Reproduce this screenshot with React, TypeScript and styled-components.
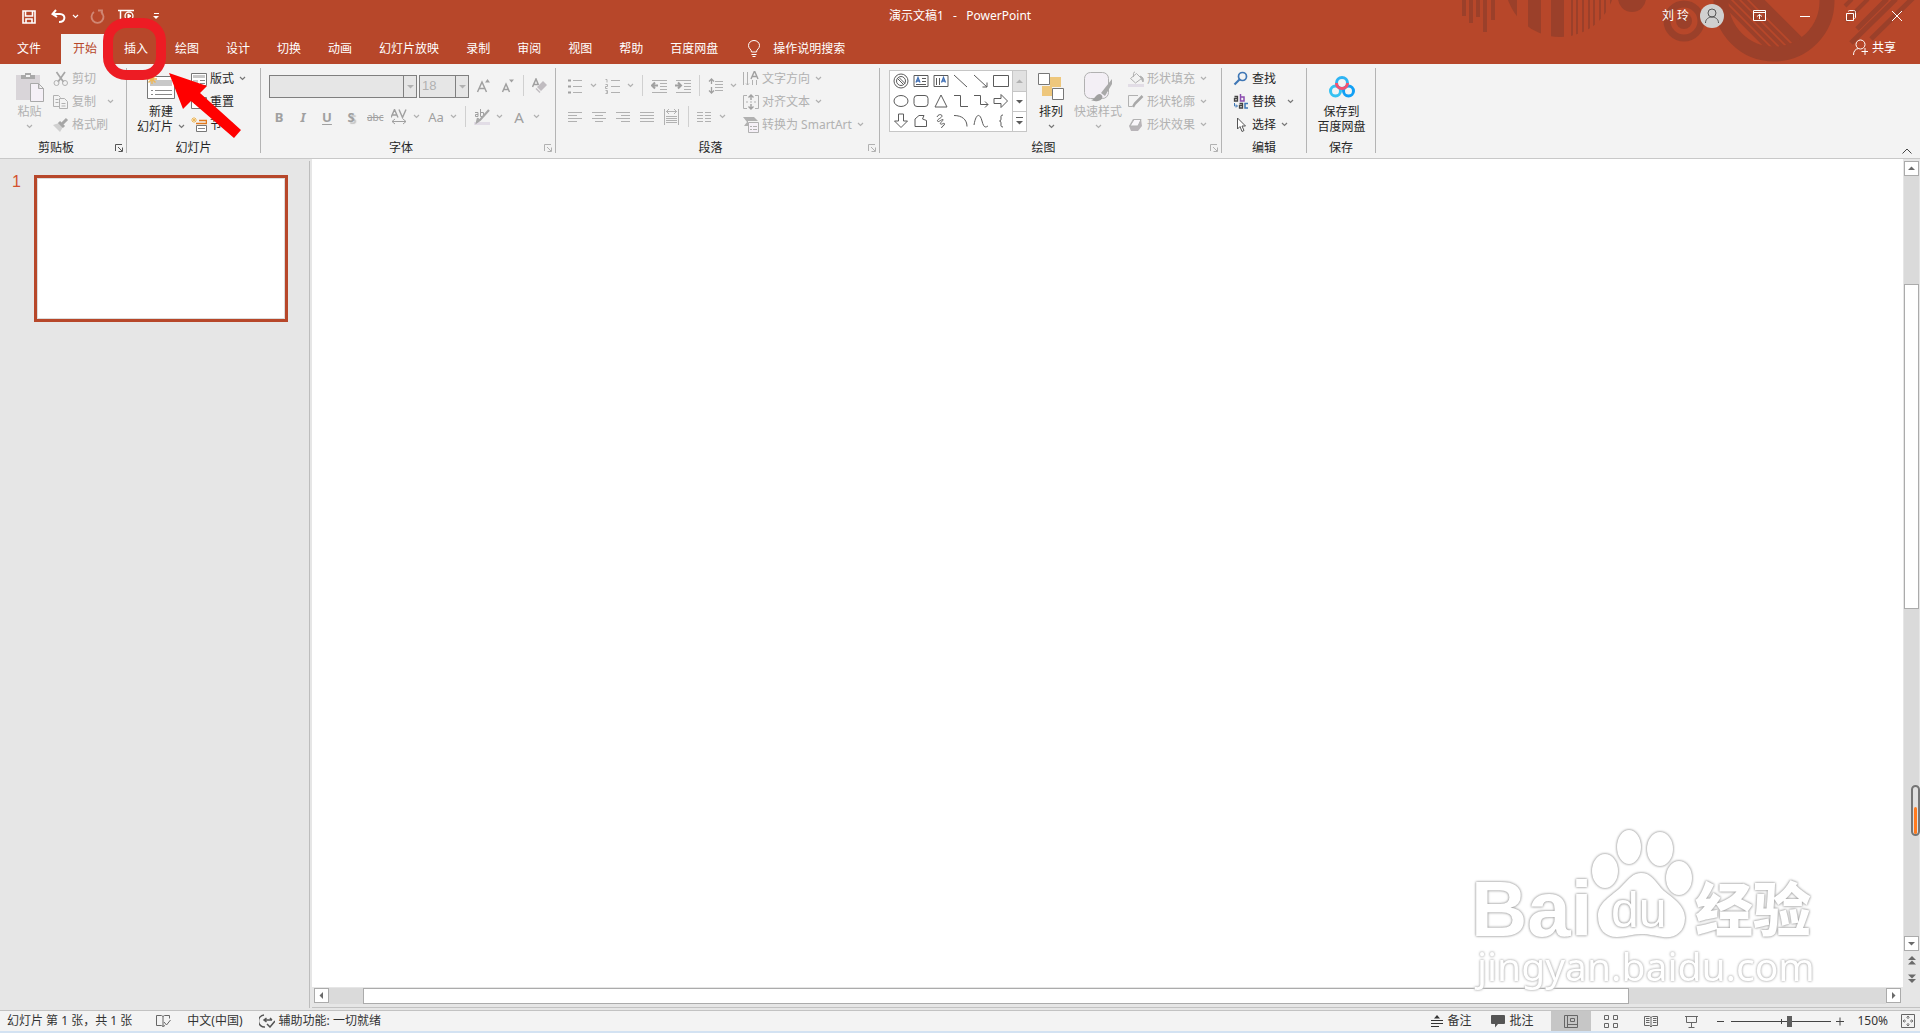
import React from "react";
import styled, { createGlobalStyle } from "styled-components";

const GlobalStyle = createGlobalStyle`
  *, *::before, *::after { box-sizing: border-box; }
  body { margin: 0; background: #e6e6e6; }
  body, button, select, input {
    font-family: "Noto Sans", "Noto Sans CJK SC", sans-serif;
    font-size: 12px;
    line-height: 16px;
  }
  button { margin: 0; padding: 0; border: 0; background: none; color: inherit; cursor: default; }
  svg { display: block; flex: none; }
`;

const brand = "#b7472a";
const ink = "#262626";
const faded = "#b1b1b1";

/* ---------- page frame ---------- */

const Page = styled.div`
  position: relative;
  display: flex;
  flex-direction: column;
  height: 100vh;
  overflow: hidden;
  color: ${ink};
`;

const Header = styled.header`
  position: relative;
  background: ${brand};
  color: #fff;
`;

const HeaderArt = styled.svg`
  position: absolute;
  top: 0;
  right: 0;
`;

const TitleBar = styled.div`
  position: relative;
  display: grid;
  grid-template-columns: 1fr auto 1fr;
  align-items: center;
  height: 34px;
  padding-bottom: 3px;
`;

const QuickAccess = styled.div`
  display: flex;
  align-items: center;
  padding: 2px 0 0 22px;
`;

const QuickButton = styled.button<{ $after: number; $dim?: boolean }>`
  display: flex;
  align-items: center;
  gap: 5px;
  margin-right: ${(p) => p.$after}px;
  opacity: ${(p) => (p.$dim ? 0.35 : 1)};
`;

const DocTitle = styled.h1`
  margin: 0;
  font-size: 12px;
  line-height: 16px;
  font-weight: 400;
  white-space: pre;
`;

const WindowArea = styled.div`
  display: flex;
  align-items: center;
  justify-content: flex-end;
`;

const Account = styled.button`
  display: flex;
  align-items: center;
  gap: 11px;
  margin-right: 12px;
`;

const Avatar = styled.span`
  display: grid;
  place-items: center;
  width: 24px;
  height: 24px;
  border-radius: 50%;
  background: #d0d0d0;
`;

const WindowButton = styled.button`
  display: grid;
  place-items: center;
  width: 46px;
  height: 30px;
`;

const TabBar = styled.nav`
  position: relative;
  display: flex;
  gap: 3px;
  height: 30px;
`;

const Tab = styled.button<{ $active?: boolean; $wide?: boolean }>`
  padding: 0 ${(p) => (p.$wide ? 17 : 12)}px;
  background: ${(p) => (p.$active ? "#f3f3f3" : "transparent")};
  color: ${(p) => (p.$active ? brand : "#fff")};
`;

const TellMe = styled.button`
  display: flex;
  align-items: center;
  gap: 13px;
  padding: 0 0 1px 15px;
`;

const Share = styled.button`
  display: flex;
  align-items: center;
  gap: 4px;
  margin-left: auto;
  padding: 0 24px 3px 0;
`;

/* ---------- ribbon ---------- */

const Ribbon = styled.section`
  display: flex;
  background: #f3f3f3;
  border-bottom: 1px solid #c8c8c8;
`;

const GroupBox = styled.section<{ $width: number }>`
  position: relative;
  display: flex;
  flex-direction: column;
  width: ${(p) => p.$width}px;
  padding-top: 3px;
  &::after {
    content: "";
    position: absolute;
    top: 4px;
    right: 0;
    bottom: 5px;
    width: 1px;
    background: #b4b4b4;
  }
`;

const GroupBody = styled.div<{ $pad: number; $center?: boolean }>`
  display: flex;
  justify-content: ${(p) => (p.$center ? "center" : "flex-start")};
  height: 69px;
  padding-left: ${(p) => p.$pad}px;
`;

const GroupFoot = styled.div`
  display: flex;
  align-items: center;
  height: 22px;
  padding: 2px 1px 0 0;
`;

const GroupName = styled.h2`
  flex: 1;
  margin: 0;
  font-size: 12px;
  line-height: 16px;
  font-weight: 400;
  text-align: center;
`;

const Launcher = styled.button<{ $off?: boolean }>`
  display: grid;
  place-items: center;
  width: 14px;
  height: 16px;
  color: ${(p) => (p.$off ? faded : "#555")};
`;

const Stack = styled.div<{ $left?: number }>`
  display: flex;
  flex-direction: column;
  margin-left: ${(p) => p.$left ?? 0}px;
`;

const Row = styled.div<{ $left?: number }>`
  display: flex;
  align-items: center;
  height: 31px;
  padding-left: ${(p) => p.$left ?? 0}px;
`;

const Rows = styled.div`
  padding-top: 3px;
`;

const SmallButton = styled.button<{ $off?: boolean; $split?: boolean }>`
  display: flex;
  align-items: center;
  gap: 3px;
  height: 23px;
  color: ${(p) => (p.$off ? faded : ink)};
  white-space: nowrap;
  & > svg:last-child:not(:first-child) { margin-left: ${(p) => (p.$split ? 8 : 2)}px; }
`;

const BigButton = styled.button<{ $width: number; $off?: boolean; $left?: number }>`
  display: flex;
  flex-direction: column;
  align-items: center;
  width: ${(p) => p.$width}px;
  height: 69px;
  margin-left: ${(p) => p.$left ?? 0}px;
  color: ${(p) => (p.$off ? faded : ink)};
  white-space: nowrap;
`;

const BigIcon = styled.span`
  display: flex;
  align-items: center;
  height: 37px;
  padding-top: 2px;
`;

const BigLine = styled.span`
  display: flex;
  align-items: center;
  gap: 5px;
  height: 15px;
`;

const Tool = styled.button`
  display: flex;
  align-items: center;
  gap: 6px;
  height: 24px;
  padding: 0 4px;
  color: ${faded};
`;

const Glyph = styled.span<{ $size?: number; $bold?: boolean; $italic?: boolean; $line?: string; $shadow?: boolean }>`
  width: 16px;
  font-size: ${(p) => p.$size ?? 13}px;
  font-weight: ${(p) => (p.$bold ? 700 : 400)};
  font-style: ${(p) => (p.$italic ? "italic" : "normal")};
  text-decoration: ${(p) => p.$line ?? "none"};
  text-shadow: ${(p) => (p.$shadow ? "2px 2px 1px #c4c4c4" : "none")};
  text-underline-offset: 2px;
  color: #a0a0a0;
  text-align: center;
  white-space: nowrap;
`;

const Rule = styled.span`
  width: 1px;
  height: 21px;
  margin: 0 4px;
  background: #d0d0d0;
`;

const Combo = styled.label<{ $width: number }>`
  display: flex;
  width: ${(p) => p.$width}px;
  height: 23px;
  margin: 1px 2px 0 0;
  border: 1px solid #7f7f7f;
  background: #e6e6e6;
`;

const ComboSelect = styled.select`
  flex: 1;
  min-width: 0;
  padding: 0 2px;
  border: 0;
  outline: 0;
  appearance: none;
  background: transparent;
  color: ${faded};
  opacity: 1;
  font-family: "Liberation Sans", sans-serif;
  font-size: 13px;
`;

const ComboArrow = styled.span`
  display: grid;
  place-items: center;
  width: 13px;
  border-left: 1px solid #7f7f7f;
  color: ${faded};
`;

const Gallery = styled.div`
  display: flex;
  width: 138px;
  height: 62px;
  margin-top: 3px;
  border: 1px solid #c6c6c6;
  background: #fff;
`;

const Shapes = styled.div`
  display: grid;
  flex: 1;
  grid-template-columns: repeat(6, 1fr);
  grid-template-rows: repeat(3, 1fr);
  padding: 0 1px;
`;

const ShapeButton = styled.button`
  display: grid;
  place-items: center;
  color: #5b5b5b;
`;

const GalleryArrows = styled.div`
  display: grid;
  grid-template-rows: repeat(3, 1fr);
  width: 14px;
  border-left: 1px solid #c6c6c6;
`;

const GalleryArrow = styled.button<{ $off?: boolean }>`
  display: grid;
  place-items: center;
  background: ${(p) => (p.$off ? "#e1e1e1" : "#fff")};
  color: ${(p) => (p.$off ? faded : "#5b5b5b")};
  & + & { border-top: 1px solid #c6c6c6; }
`;

const Collapse = styled.button`
  align-self: flex-end;
  margin-left: auto;
  padding: 4px 8px;
`;

/* ---------- workspace ---------- */

const Workspace = styled.main`
  display: flex;
  flex: 1;
  min-height: 0;
  background: #e6e6e6;
`;

const SlidePane = styled.aside`
  display: flex;
  align-items: flex-start;
  width: 310px;
  margin: 2px 0 2px;
  padding: 14px 0 0 12px;
  border-right: 1px solid #bdbdbd;
`;

const SlideNumber = styled.span`
  width: 22px;
  font-family: "Liberation Sans", sans-serif;
  font-size: 16px;
  line-height: 14px;
  color: #d35230;
`;

const Thumb = styled.button`
  width: 254px;
  aspect-ratio: 254 / 147;
  border: 3px solid ${brand};
  outline: 1px solid #dcdcdc;
  outline-offset: -4px;
  background: #fff;
`;

const Editor = styled.div`
  display: grid;
  flex: 1;
  grid-template-columns: 1fr 17px;
  grid-template-rows: 1fr 20px;
  margin: 0 0 2px 2px;
  border-bottom: 1px solid #c2c2c2;
`;

const Canvas = styled.div`
  background: #fff;
`;

const VScroll = styled.div`
  display: flex;
  flex-direction: column;
  padding: 2px 1px 0;
`;

const HScroll = styled.div`
  display: flex;
  height: 16px;
  margin-top: 1px;
  padding: 0 2px;
`;

const Track = styled.span<{ $grow: number }>`
  flex: ${(p) => p.$grow} 1 0;
  background: #dadada;
`;

const ScrollThumb = styled.span<{ $grow: number }>`
  flex: ${(p) => p.$grow} 1 0;
  border: 1px solid #ababab;
  background: #fff;
`;

const ScrollButton = styled.button`
  display: grid;
  flex: none;
  place-items: center;
  width: 15px;
  height: 15px;
  border: 1px solid #ababab;
  background: #fff;
  color: #6a6a6a;
`;

const PageButton = styled.button`
  display: grid;
  place-items: center;
  height: 18px;
  color: #6a6a6a;
`;

/* ---------- status bar ---------- */

const Status = styled.footer`
  display: flex;
  align-items: center;
  height: 23px;
  padding: 0 5px 0 7px;
  border-top: 1px solid #c2c2c2;
  border-bottom: 2px solid #d3e2f2;
  background: #f3f3f3;
  color: #333;
`;

const StatusItem = styled.button<{ $after: number }>`
  display: flex;
  align-items: center;
  gap: 4px;
  height: 20px;
  margin-right: ${(p) => p.$after}px;
  white-space: nowrap;
`;

const Push = styled.span`
  flex: 1;
`;

const ViewButton = styled.button<{ $active?: boolean }>`
  display: grid;
  place-items: center;
  width: 40px;
  height: 20px;
  background: ${(p) => (p.$active ? "#c6c6c6" : "transparent")};
`;

const ZoomSlider = styled.input`
  width: 100px;
  height: 12px;
  margin: 0 5px;
  appearance: none;
  background:
    linear-gradient(#444, #444) center / 1px 5px no-repeat,
    linear-gradient(#444, #444) center / 100% 1px no-repeat;
  &::-webkit-slider-thumb {
    appearance: none;
    width: 5px;
    height: 11px;
    background: #5e5e5e;
  }
`;

/* ---------- overlays ---------- */

const Marker = styled.span`
  position: absolute;
  top: 18px;
  left: 103px;
  width: 63px;
  height: 62px;
  border: 10px solid #ed1c24;
  border-radius: 23px;
  pointer-events: none;
`;

const Pointer = styled.svg`
  position: absolute;
  top: 73px;
  left: 169px;
  pointer-events: none;
`;

const Meter = styled.span`
  position: absolute;
  top: 785px;
  right: 0;
  display: flex;
  align-items: flex-end;
  width: 9px;
  height: 51px;
  border: 2px solid #757575;
  border-radius: 5px;
  padding: 0 1px;
  background: #e0e0e0;
  &::before {
    content: "";
    width: 100%;
    height: 27px;
    border-radius: 2px;
    background: #ff7a1e;
  }
`;

const Watermark = styled.svg`
  position: absolute;
  right: 92px;
  bottom: 28px;
  pointer-events: none;
  fill: #fff;
  & .outlined { filter: drop-shadow(0 0 1px #999) drop-shadow(0 0 1px #c8c8c8); }
  & .light { filter: drop-shadow(0 0 1px #aaa) drop-shadow(0 0 1px #ddd); }
`;

/* ---------- drawings ---------- */

type IconProps = { w?: number; h?: number; children: React.ReactNode };
const Icon = ({ w = 16, h = 16, children }: IconProps) => (
  <svg width={w} height={h} viewBox={`0 0 ${w} ${h}`} fill="none" stroke="currentColor" strokeWidth="1" aria-hidden="true">
    {children}
  </svg>
);

const Caret = () => (
  <Icon w={7} h={5}><path d="M1 1l2.5 2.5L6 1" strokeWidth="1.2" stroke="#777" /></Icon>
);
const CaretOff = () => (
  <Icon w={7} h={5}><path d="M1 1l2.5 2.5L6 1" strokeWidth="1.2" /></Icon>
);

const turns = { down: 0, left: 90, up: 180, right: 270 };
const Triangle = ({ to = "down" }: { to?: keyof typeof turns }) => (
  <Icon w={9} h={9}><path d="M1 3h7L4.500 6.500z" fill="currentColor" stroke="none" transform={`rotate(${turns[to]} 4.500 4.500)`} /></Icon>
);

const LauncherIcon = () => (
  <Icon w={8} h={8}><path d="M.5 7V.5H7M3 3l4 4M7.500 3.500v4h-4" /></Icon>
);

const shapes: [string, React.ReactNode][] = [
  ["无", <><circle cx="8" cy="8" r="7" /><circle cx="8" cy="8" r="4.500" /><path d="M4.500 5.500l6 6M6 4.500l6 6" /></>],
  ["文本框", <><path d="M1 2.500h14v11H1zM9 5.500h4M9 8.500h4M3 11.500h10" /><path d="M3 9.500L5 4.500l2 5M4 8h2.500" stroke="#3f6fb5" strokeWidth="1.300" /></>],
  ["竖排文本框", <><path d="M1 2.500h14v11H1zM3.500 5v7M6.500 5v7" /><path d="M8.500 9.500l2-5 2 5M9.500 8h2.500" stroke="#3f6fb5" strokeWidth="1.300" /></>],
  ["直线", <path d="M1 2l13 12" />],
  ["箭头", <path d="M1 2l13 12M14 9.500V14H9.500" />],
  ["矩形", <path d="M.5 2.500h15v11H.5z" />],
  ["椭圆", <ellipse cx="8" cy="8" rx="7" ry="5.500" />],
  ["圆角矩形", <rect x="1" y="2.500" width="14" height="11" rx="3" />],
  ["三角形", <path d="M8 2l6 12H2z" />],
  ["肘形连接符", <path d="M1 2.500h6.500v11H15" />],
  ["肘形箭头", <path d="M1 2.500h6.500v9H15M12 8.500l3 3-3 3" />],
  ["右箭头", <path d="M1 5.500h7V1.500l6.500 6.500L8 14.500v-4H1z" />],
  ["下箭头", <path d="M5.500 1v7H1.500L8 14.500 14.500 8h-4V1z" />],
  ["任意多边形", <path d="M2 13.500V6l4-3.500h5L9.500 6l4 1.500v6z" />],
  ["自由曲线", <path d="M4 4c1-3 5-3 5-1S4 6 4.500 8 9 6 10 6.500 6.500 10 7.500 11s4-2 4 0-3 2-3 4" />],
  ["弧形", <path d="M1 2.500c8 0 13 4 13 11" />],
  ["曲线", <path d="M1 12C3 0 7 0 9 8s4 6 6 5" />],
  ["左大括号", <path d="M10 2c-2.500 0-2 1.500-2 3S8 8 6.500 8C8 8 8 9.500 8 11s-.5 3 2 3" />],
];

const art = "#9b402a";
const Decoration = () => (
  <HeaderArt width="460" height="64" viewBox="1460 0 460 64" aria-hidden="true">
    <defs>
      <clipPath id="disc"><circle cx="1560" cy="-18" r="55" /></clipPath>
      <clipPath id="hole"><circle cx="1774" cy="1" r="46" /></clipPath>
    </defs>
    <path fill={art} d="M1462 0h4v16h-4zM1469 0h4v23h-4zM1476 0h4v17h-4zM1483 0h4v32h-4zM1491 0h4v20h-4z" />
    <path clipPath="url(#disc)" fill={art} d="M1508 0h9v40h-9zM1528 0h13v40h-13zM1551 0h13v40h-13zM1571 0h2v40h-2zM1576 0h2v40h-2zM1582 0h2v40h-2zM1588 0h2v40h-2zM1593 0h2v40h-2zM1599 0h2v40h-2zM1604 0h2v40h-2zM1610 0h2v40h-2z" />
    <circle cx="1632" cy="-2" r="14" fill={art} />
    <circle cx="1684" cy="21" r="17" fill="none" stroke={art} strokeWidth="7" />
    <circle cx="1684" cy="21" r="8" fill={art} />
    <circle cx="1774" cy="1" r="53" fill="none" stroke={art} strokeWidth="15" />
    <g clipPath="url(#hole)" stroke={art} strokeWidth="4">
      <path d="M1712 -8l60 60M1720 -8l60 60M1728 -8l60 60M1736 -8l60 60" />
      <path d="M1751 -6l60 60" strokeWidth="11" />
    </g>
    <path stroke={art} strokeWidth="4" d="M1845 6l7 -7M1846 21l22 -22" />
    <path stroke={art} strokeWidth="5" d="M1857 29l30 -30M1851 43l45 -44M1871 39l42 -41" />
  </HeaderArt>
);

/* ---------- ribbon parts ---------- */

type GroupProps = { name: string; width: number; pad?: number; center?: boolean; launcher?: "on" | "off"; children: React.ReactNode };
const Group = ({ name, width, pad = 8, center, launcher, children }: GroupProps) => (
  <GroupBox $width={width} aria-label={name}>
    <GroupBody $pad={pad} $center={center}>{children}</GroupBody>
    <GroupFoot>
      <GroupName>{name}</GroupName>
      {launcher && <Launcher $off={launcher === "off"} aria-label={`${name}设置`}><LauncherIcon /></Launcher>}
    </GroupFoot>
  </GroupBox>
);

const Align = ({ d, label }: { d: string; label: string }) => <Tool aria-label={label}><Icon><path d={d} /></Icon></Tool>;

const Home = () => (
  <Ribbon>
    <Group name="剪贴板" width={127} pad={7} launcher="on">
      <BigButton $width={45} $off>
        <BigIcon>
          <Icon w={28} h={30}>
            <path d="M0 3h24v25H0z" fill="#d9d5d9" stroke="none" />
            <path d="M5 7V3h4V1h6v2h4v4z" fill="#a9a9a9" stroke="none" /><path d="M10 3h4v2h-4z" fill="#f3f3f3" stroke="none" />
            <path d="M14.500 11.500h8l5 5v13h-13zM22.500 11.500v5h5" fill="#f5f0f7" stroke="#a9a9a9" />
          </Icon>
        </BigIcon>
        <BigLine>粘贴</BigLine><BigLine><CaretOff /></BigLine>
      </BigButton>
      <Stack $left={1}>
        <SmallButton $off><Icon><path d="M3.500 1l7 10M12 1L5 11" strokeWidth="1.700" stroke="#a6a6a6" /><circle cx="3.500" cy="12" r="2.500" /><circle cx="12" cy="12" r="2.500" /></Icon>剪切</SmallButton>
        <SmallButton $off $split><Icon><path d="M6.500 12.500h-6v-11h5l2 2M2.500 5.500h3M2.500 8.500h3M6.500 4.500h5l3 3v7h-8zM8.500 9.500h4M8.500 12h4" /></Icon>复制<CaretOff /></SmallButton>
        <SmallButton $off><Icon><path d="M0 8l6-2 4 4-3 5z" fill="#d0d0d0" stroke="none" /><path d="M6 5l5 5M9 7l5-5" stroke="#a6a6a6" strokeWidth="3" /></Icon>格式刷</SmallButton>
      </Stack>
    </Group>

    <Group name="幻灯片" width={134}>
      <BigButton $width={52}>
        <BigIcon>
          <Icon w={28} h={26}>
            <path d="M.5 2.500h27v22H.5z" fill="#fff" stroke="#777" /><path d="M3 6h22v6H3z" fill="#c8c8c8" stroke="none" />
            <path d="M4 16.500h2M8 16.500h17M4 20.500h2M8 20.500h17" stroke="#888" /><path d="M5 0v10M0 5h10M1.500 1.500l7 7M8.500 1.500l-7 7" stroke="#eeb85a" strokeWidth="1.500" />
          </Icon>
        </BigIcon>
        <BigLine>新建</BigLine><BigLine>幻灯片<Caret /></BigLine>
      </BigButton>
      <Stack $left={4}>
        <SmallButton><Icon><path d="M.5 2.500h15v12H.5z" fill="#fff" stroke="#777" /><path d="M2 4h12v3H2zM2 9h5v4H2z" fill="#c8c8c8" stroke="none" /><path d="M9 9.500h5M9 12.500h5" stroke="#888" /></Icon>版式<Caret /></SmallButton>
        <SmallButton><Icon><path d="M.5 3.500h15v11H.5z" fill="#fff" stroke="#777" /><path d="M3 9.500h8M8 6l4 3.500L8 13" stroke="#888" /></Icon>重置</SmallButton>
        <SmallButton><Icon><path d="M5.500 8.500h10v6h-10z" fill="#fff" stroke="#777" /><path d="M7 11.500h7" stroke="#888" /><path d="M8 3.500h7.500V6M5 6.500h11" stroke="#e07a1f" strokeWidth="1.500" /><path d="M3 0v6M0 3h6M1 1l4 4M5 1L1 5" stroke="#eeb85a" /></Icon>节<Caret /></SmallButton>
      </Stack>
    </Group>

    <Group name="字体" width={295} pad={6} launcher="off">
      <Rows>
        <Row $left={2}>
          <Combo $width={148}><ComboSelect aria-label="字体" disabled><option></option></ComboSelect><ComboArrow><Triangle /></ComboArrow></Combo>
          <Combo $width={50}><ComboSelect aria-label="字号" disabled><option>18</option></ComboSelect><ComboArrow><Triangle /></ComboArrow></Combo>
          <Tool aria-label="增大字号"><Icon><path d="M2.500 14L7 4l4.500 10M4 10.500h6" strokeWidth="1.500" stroke="#a0a0a0" /><path d="M10 4.500h5L12.500 1z" fill="#a0a0a0" stroke="none" /></Icon></Tool>
          <Tool aria-label="减小字号"><Icon><path d="M3.500 14L7 6l3.500 8M5 11.500h4.500" strokeWidth="1.500" stroke="#a0a0a0" /><path d="M10 1.500h5L12.500 4.500z" fill="#a0a0a0" stroke="none" /></Icon></Tool>
          <Rule />
          <Tool aria-label="清除格式"><Icon><path d="M.5 9L4 1l2.500 6M2 6.500h4" strokeWidth="1.500" stroke="#a0a0a0" /><path d="M5 9l6-6 4 4-6 6zM4.500 10l4 4-1 1-4-4z" fill="#c0bcc0" stroke="none" /></Icon></Tool>
        </Row>
        <Row>
          <Tool><Glyph $bold>B</Glyph></Tool>
          <Tool><Glyph $bold $italic>I</Glyph></Tool>
          <Tool><Glyph $bold $line="underline">U</Glyph></Tool>
          <Tool><Glyph $bold $shadow>S</Glyph></Tool>
          <Tool><Glyph $size={10} $line="line-through">abc</Glyph></Tool>
          <Tool aria-label="字符间距">
            <Icon><path d="M1 1.500l3 7 3-7M8 8.500l3-7 3 7M9.500 6.500h3.500" stroke="#a0a0a0" strokeWidth="0" /><path d="M0 8.500l3.500-8 3.500 8M1.500 6h4M8 .5l3.500 8 3.500-8" stroke="#a0a0a0" strokeWidth="1.400" /><path d="M1 12.500h14M4 10l-3 2.500L4 15M12 10l3 2.500-3 2.500" stroke="#a0a0a0" /></Icon><CaretOff />
          </Tool>
          <Tool><Glyph>Aa</Glyph><CaretOff /></Tool>
          <Rule />
          <Tool aria-label="突出显示颜色">
            <Icon><path d="M0 13h16v3H0z" fill="#e2dde6" stroke="none" /><path d="M1 3.500h3v4H1.500V5.500H4M6.500 0v7.500h3v-4h-3" stroke="#a0a0a0" /><path d="M15 1L6 11l-3 2 1-4" stroke="#a8a8a8" strokeWidth="2.200" /></Icon><CaretOff />
          </Tool>
          <Tool><Glyph $size={15}>A</Glyph><CaretOff /></Tool>
        </Row>
      </Rows>
    </Group>

    <Group name="段落" width={324} launcher="off">
      <Rows>
        <Row>
          <Tool aria-label="项目符号"><Icon><path d="M5 2.500h9M5 8.500h9M5 14.500h9" /><path d="M0 1.500h3v2H0zM0 7.500h3v2H0zM0 13.500h3v2H0z" fill="#a0a0a0" stroke="none" /></Icon><CaretOff /></Tool>
          <Tool aria-label="编号"><Icon><path d="M6 2.500h9M6 8.500h9M6 14.500h9M.5 1.500H2v3M.5 6.500h2v2h-2v2h2M.5 12.500h2v3h-2M1 14h1.500" /></Icon><CaretOff /></Tool>
          <Rule />
          <Tool aria-label="减少缩进"><Icon><path d="M1 2.500h15M9 5.500h7M9 8.500h7M9 11.500h7M1 14.500h15" /><path d="M1 7.500h6M4 4.500l-3 3 3 3" strokeWidth="2" stroke="#a0a0a0" /></Icon></Tool>
          <Tool aria-label="增加缩进"><Icon><path d="M1 2.500h15M9 5.500h7M9 8.500h7M9 11.500h7M1 14.500h15" /><path d="M0 7.500h6M3 4.500l3 3-3 3" strokeWidth="2" stroke="#a0a0a0" /></Icon></Tool>
          <Rule />
          <Tool aria-label="行距"><Icon><path d="M3.500 1v5M1 3.500L3.500 1 6 3.500M3.500 9v6M1 12.500L3.500 15 6 12.500" stroke="#a0a0a0" strokeWidth="1.300" /><path d="M7 3.500h8M7 6.500h8M7 9.500h8M7 12.500h8" /></Icon><CaretOff /></Tool>
        </Row>
        <Row>
          <Align label="左对齐" d="M0 3.500h14M0 6.500h9M0 9.500h14M0 12.500h9" />
          <Align label="居中" d="M0 3.500h14M3 6.500h8M0 9.500h14M3 12.500h8" />
          <Align label="右对齐" d="M0 3.500h14M5 6.500h9M0 9.500h14M5 12.500h9" />
          <Align label="两端对齐" d="M0 3.500h14M0 6.500h14M0 9.500h14M0 12.500h14" />
          <Align label="分散对齐" d="M.5 0v16M14.500 0v16M2 2.500h11M5 0L2.500 2.500 5 5M10 0l2.500 2.500L10 5M2 7.500h11M2 9.500h11M2 11.500h11M2 13.500h11" />
          <Rule />
          <Tool aria-label="分栏"><Icon><path d="M0 3.500h6M8 3.500h6M0 6.500h6M8 6.500h6M0 9.500h6M8 9.500h6M0 12.500h6M8 12.500h6" /></Icon><CaretOff /></Tool>
        </Row>
      </Rows>
      <Stack $left={2}>
        <SmallButton $off><Icon><path d="M.5 1v13M4.500 1v13M9.500 9v5M13.500 9v5M3 12.500l1.500 1.500L6 12.500" /><path d="M8 8l3.500-8L15 8M9.500 5.500h4" stroke="#a0a0a0" strokeWidth="1.400" /></Icon>文字方向<CaretOff /></SmallButton>
        <SmallButton $off><Icon><path d="M4 1.500H.5v13H4M12 1.500h3.500v13H12M3 8h2M7 8h2M11 8h2" /><path d="M8 1v5M5.500 3.500L8 1l2.500 2.500M8 10v5M5.500 12.500L8 15l2.500-2.500" stroke="#a0a0a0" strokeWidth="1.400" /></Icon>对齐文本<CaretOff /></SmallButton>
        <SmallButton $off><Icon><path d="M0 0h11l4 4H5v5H1l3-4z" fill="#b1b1b1" stroke="none" /><path d="M5.500 5.500h10v10h-10z" fill="#f5f0f7" /><path d="M7 9.500h2M10 9.500h4M7 12.500h2M10 12.500h4" /></Icon>转换为 SmartArt<CaretOff /></SmallButton>
      </Stack>
    </Group>

    <Group name="绘图" width={342} pad={9} launcher="off">
      <Gallery>
        <Shapes>{shapes.map(([label, drawing]) => <ShapeButton key={label} aria-label={label}><Icon>{drawing}</Icon></ShapeButton>)}</Shapes>
        <GalleryArrows>
          <GalleryArrow $off aria-label="上一行"><Triangle to="up" /></GalleryArrow>
          <GalleryArrow aria-label="下一行"><Triangle /></GalleryArrow>
          <GalleryArrow aria-label="其他"><Icon w={9} h={9}><path d="M1 .5h7" /><path d="M1 4h7L4.500 7.500z" fill="currentColor" stroke="none" /></Icon></GalleryArrow>
        </GalleryArrows>
      </Gallery>
      <BigButton $width={38} $left={5}>
        <BigIcon><Icon w={26} h={28}><path d="M12 4h11v10H12zM4 13h10v10H4z" fill="#eec77c" stroke="none" /><path d="M.5.5h11v11H.5zM14.500 15.500h11v11h-11z" fill="#fff" stroke="#777" /></Icon></BigIcon>
        <BigLine>排列</BigLine><BigLine><Caret /></BigLine>
      </BigButton>
      <BigButton $width={50} $left={3} $off>
        <BigIcon><Icon w={28} h={30}><rect x=".5" y=".5" width="24" height="26" rx="6" fill="#f3eff5" /><path d="M28 7L17 21l4 3 7-12z" fill="#a9a9a9" stroke="none" /><path d="M7 28c4 0 4-6 9-6 4 2 3 6-2 7-3 .5-5 0-7-1z" fill="#a0a0a0" stroke="none" /></Icon></BigIcon>
        <BigLine>快速样式</BigLine><BigLine><CaretOff /></BigLine>
      </BigButton>
      <Stack $left={5}>
        <SmallButton $off><Icon><path d="M0 13h16v3H0z" fill="#e2dde6" stroke="none" /><path d="M2.500 7.500l6-5 5 5-6 4.500zM7 1c-2 0-1.500 2-1.500 5" /><path d="M12 5c3 1 4 3 3 6z" fill="#b1b1b1" /></Icon>形状填充<CaretOff /></SmallButton>
        <SmallButton $off><Icon><path d="M10 1.500H.5v11H4" /><path d="M14.500 2L7 9.500l-2 3.500" strokeWidth="2.500" stroke="#a8a8a8" /></Icon>形状轮廓<CaretOff /></SmallButton>
        <SmallButton $off><Icon><path d="M1 9l4-7h8l1 7-4 5H3z" fill="#b8b4b8" stroke="none" /><path d="M2 9l4-6.500h7L10 9z" fill="#faf7fb" /></Icon>形状效果<CaretOff /></SmallButton>
      </Stack>
    </Group>

    <Group name="编辑" width={85} pad={11}>
      <Stack>
        <SmallButton><Icon><circle cx="9.500" cy="5.500" r="4" stroke="#3f77b5" strokeWidth="1.700" /><path d="M6.500 8.500L1.500 13.500" stroke="#3f77b5" strokeWidth="2.200" /></Icon>查找</SmallButton>
        <SmallButton $split>
          <Icon>
            <path d="M1.500 2.500h3v4.500H1.500V4.500H4.500" stroke="#444" strokeWidth="1.300" /><path d="M7.500 0v7h3.500V3H7.500" stroke="#8a4baf" strokeWidth="1.500" />
            <path d="M1.500 9v3H4M3 10.500l1.500 1.500L3 13.500" stroke="#3f77b5" /><path d="M6.500 9.500h3V14h-3v-2.500h3" stroke="#444" strokeWidth="1.300" /><path d="M15 9.500h-3V14h3" stroke="#3f77b5" strokeWidth="1.500" />
          </Icon>替换<Caret />
        </SmallButton>
        <SmallButton><Icon><path d="M4.500 1v11l2.500-2.500 2 5 2-1-2-4.500h3.500z" fill="#fff" stroke="#555" /></Icon>选择<Caret /></SmallButton>
      </Stack>
    </Group>

    <Group name="保存" width={69} pad={0} center>
      <BigButton $width={60}>
        <BigIcon>
          <Icon w={26} h={22}>
            <circle cx="6.500" cy="15" r="5" stroke="#35c2f2" strokeWidth="3" /><circle cx="19.500" cy="15" r="5" stroke="#12a0f5" strokeWidth="3" />
            <circle cx="13" cy="7" r="5.500" stroke="#2fb4f3" strokeWidth="3" /><path d="M7.500 7a5.500 5.500 0 0 0 11 0" stroke="#f7506f" strokeWidth="3" />
          </Icon>
        </BigIcon>
        <BigLine>保存到</BigLine><BigLine>百度网盘</BigLine>
      </BigButton>
    </Group>
    <Collapse aria-label="折叠功能区"><Icon w={10} h={6}><path d="M.5 5.500L5 1l4.500 4.500" stroke="#444" /></Icon></Collapse>
  </Ribbon>
);

const tabs = ["插入", "绘图", "设计", "切换", "动画", "幻灯片放映", "录制", "审阅", "视图", "帮助", "百度网盘"];

export default function App() {
  return (
    <Page>
      <GlobalStyle />
      <Header>
        <Decoration />
        <TitleBar>
          <QuickAccess>
            <QuickButton $after={15} aria-label="保存"><Icon w={14} h={14}><path d="M1 1h12v12H1zM3.500 1v5h7V1M4 13V9h6v4" strokeWidth="1.600" /></Icon></QuickButton>
            <QuickButton $after={11} aria-label="撤消"><Icon><path d="M5 1L1.500 5 6 8M2 5h7c6 0 6 8-1 8" strokeWidth="2" /></Icon><Icon w={7} h={5}><path d="M1 1l2.500 2.500L6 1" strokeWidth="1.200" /></Icon></QuickButton>
            <QuickButton $after={13} $dim aria-label="重复"><Icon w={15} h={15}><path d="M4 3a6 6 0 1 0 7 0M8 1.500h4v4" strokeWidth="1.800" /></Icon></QuickButton>
            <QuickButton $after={18} aria-label="从头开始"><Icon w={17} h={15}><path d="M0 1.500h16M2.500 2v9H7" strokeWidth="1.500" /><circle cx="11" cy="7" r="4" strokeWidth="1.300" /><path d="M10 5l3 2-3 2z" fill="#fff" /></Icon></QuickButton>
            <QuickButton $after={0} aria-label="自定义快速访问工具栏"><Icon w={7} h={7}><path d="M1 .5h5" /><path d="M0 3h6L3 6z" fill="#fff" stroke="none" /></Icon></QuickButton>
          </QuickAccess>
          <DocTitle>{"演示文稿1   -   PowerPoint"}</DocTitle>
          <WindowArea>
            <Account>刘 玲<Avatar><Icon w={16} h={16}><circle cx="8" cy="5" r="4" stroke="#555" /><path d="M1.500 15c0-8 13-8 13 0" stroke="#555" /></Icon></Avatar></Account>
            <WindowButton aria-label="功能区显示选项"><Icon w={13} h={11}><path d="M.5.5h12v10H.5zM.5 2.500h12M6.500 9V4.500M4 6.500l2.500-2 2.500 2" /></Icon></WindowButton>
            <WindowButton aria-label="最小化"><Icon w={10} h={10}><path d="M0 5.500h10" /></Icon></WindowButton>
            <WindowButton aria-label="还原"><Icon w={10} h={11}><path d="M.5 3.500h7v7h-7zM2.500 1.500c0-.5 0-1 1-1h4c1.500 0 2 .5 2 2v5c0 .5-.5 1-1 1" /></Icon></WindowButton>
            <WindowButton aria-label="关闭"><Icon w={10} h={10}><path d="M0 0l10 10M10 0L0 10" /></Icon></WindowButton>
          </WindowArea>
        </TitleBar>
        <TabBar>
          <Tab $wide>文件</Tab>
          <Tab $active>开始</Tab>
          {tabs.map((name) => <Tab key={name}>{name}</Tab>)}
          <TellMe><Icon w={12} h={17}><path d="M3.500 12c0-3-3-3-3-6.500a5.500 5 0 0 1 11 0c0 3.500-3 3.500-3 6.500zM3.500 14.500h5M4.500 16.500h3" /></Icon>操作说明搜索</TellMe>
          <Share><Icon w={15} h={17}><circle cx="7.500" cy="5.500" r="4.500" /><path d="M.5 16c0-4 2-6 5-6.500M12 9v7M8.500 12.500h7" /></Icon>共享</Share>
        </TabBar>
      </Header>

      <Home />

      <Workspace>
        <SlidePane>
          <SlideNumber>1</SlideNumber>
          <Thumb aria-label="幻灯片 1" />
        </SlidePane>
        <Editor>
          <Canvas />
          <VScroll>
            <ScrollButton aria-label="向上滚动"><Triangle to="up" /></ScrollButton>
            <Track $grow={108} /><ScrollThumb $grow={324} /><Track $grow={328} />
            <ScrollButton aria-label="向下滚动"><Triangle /></ScrollButton>
            <PageButton aria-label="上一张幻灯片"><Icon w={8} h={9}><path d="M0 4h8L4 0zM0 8.500h8L4 4.500z" fill="currentColor" stroke="none" /></Icon></PageButton>
            <PageButton aria-label="下一张幻灯片"><Icon w={8} h={9}><path d="M0 .5h8L4 4.500zM0 5h8L4 9z" fill="currentColor" stroke="none" /></Icon></PageButton>
          </VScroll>
          <HScroll>
            <ScrollButton aria-label="向左滚动"><Triangle to="left" /></ScrollButton>
            <Track $grow={34} /><ScrollThumb $grow={1266} /><Track $grow={257} />
            <ScrollButton aria-label="向右滚动"><Triangle to="right" /></ScrollButton>
          </HScroll>
        </Editor>
      </Workspace>

      <Status>
        <StatusItem $after={24}>幻灯片 第 1 张，共 1 张</StatusItem>
        <StatusItem $after={16} aria-label="拼写检查"><Icon w={15} h={14}><path d="M7 12.500V2.500L5.500 1.500H.5v10h5zM7 2.500l1.500-1h5v3M7 12.500l2-1M8 8l2.500 3 4-5" stroke="#666" /></Icon></StatusItem>
        <StatusItem $after={16}>中文(中国)</StatusItem>
        <StatusItem $after={0}><Icon w={16} h={14}><path d="M5 1a6 6 0 0 0 1 12M5 6h8M7.500 4L5 6l2.500 2M11 4l2 2M8 10l3 3 5-6" stroke="#555" strokeWidth="1.500" /></Icon>辅助功能: 一切就绪</StatusItem>
        <Push />
        <StatusItem $after={20}><Icon w={12} h={12}><path d="M0 5.500h12M0 8.500h12M0 11.500h8" /><path d="M3 3.500h6L6 0z" fill="currentColor" stroke="none" /></Icon>备注</StatusItem>
        <StatusItem $after={18}><Icon w={14} h={14}><path d="M1 1h12c.5 0 1 .5 1 1v7c0 .5-.5 1-1 1H7l-3 3.500V10H1c-.5 0-1-.5-1-1V2c0-.5.5-1 1-1z" fill="#555" stroke="none" /></Icon>批注</StatusItem>
        <ViewButton $active aria-label="普通视图"><Icon w={14} h={13}><path d="M.5.5h13v12H.5zM3.500.5v12M3.500 9.500h10M6.500 3.500h4v3h-4z" stroke="#666" /></Icon></ViewButton>
        <ViewButton aria-label="幻灯片浏览"><Icon w={14} h={13}><path d="M.5.5h4v4h-4zM9.500.5h4v4h-4zM.5 8.500h4v4h-4zM9.500 8.500h4v4h-4z" stroke="#666" /></Icon></ViewButton>
        <ViewButton aria-label="阅读视图"><Icon w={14} h={13}><path d="M.5 1.500h5L7 2.500l1.500-1h5v9h-5L7 12l-1.500-1.500h-5zM7 2.500V12M2 3.500h3.500M2 5.500h3.500M2 7.500h3.500M9 3.500h3.500M9 5.500h3.500M9 7.500h3.500" stroke="#666" /></Icon></ViewButton>
        <ViewButton aria-label="幻灯片放映"><Icon w={13} h={13}><path d="M0 1.500h13M1.500 2v5.500h10V2M6.500 7.500v5M3.500 12.500h6" stroke="#666" /></Icon></ViewButton>
        <StatusItem $after={0} aria-label="缩小"><Icon w={15} h={9}><path d="M6 4.500h7" stroke="#444" /></Icon></StatusItem>
        <ZoomSlider type="range" aria-label="显示比例" min={0} max={100} defaultValue={59} />
        <StatusItem $after={13} aria-label="放大"><Icon w={8} h={9}><path d="M0 4.500h8M4 .5v8" stroke="#444" /></Icon></StatusItem>
        <StatusItem $after={13}>150%</StatusItem>
        <StatusItem $after={0} aria-label="适应窗口"><Icon w={14} h={14}><path d="M.5.5h13v13H.5zM7 2v3M7 9v3M2 7h3M9 7h3" stroke="#666" /><path d="M5.500 3.500L7 2l1.500 1.500M5.500 10.500L7 12l1.500-1.500M3.500 5.500L2 7l1.500 1.500M10.500 5.500L12 7l-1.500 1.500" stroke="#777" /></Icon></StatusItem>
      </Status>

      <Meter />
      <Watermark width="368" height="186" viewBox="1460 819 368 186" role="img" aria-label="百度经验">
        <g className="outlined">
          <ellipse cx="1605" cy="871" rx="13" ry="17" />
          <ellipse cx="1629" cy="847" rx="12" ry="17" />
          <ellipse cx="1660" cy="849" rx="13" ry="17" />
          <ellipse cx="1679" cy="878" rx="13" ry="17" />
          <path d="M1641 873c10 0 14 8 20 15s24 15 24 30-12 21-22 19c-9-1-13-3-22-3s-14 3-24 3c-12 0-19-8-19-21 0-14 14-20 23-29s12-14 20-14z" />
        </g>
        <text className="outlined" x="1471" y="936" fontFamily="Liberation Sans, sans-serif" fontWeight="700" fontSize="78">Bai</text>
        <text className="outlined" x="1611" y="927" fontFamily="Liberation Sans, sans-serif" fontSize="50">du</text>
        <text className="outlined" x="1695" y="931" fontFamily="Noto Sans CJK SC, sans-serif" fontWeight="900" fontSize="58">经验</text>
        <text className="light" x="1477" y="981" fontFamily="Noto Sans, sans-serif" fontSize="39">jingyan.baidu.com</text>
      </Watermark>
      <Marker />
      <Pointer width="73" height="66" viewBox="0 0 73 66" aria-hidden="true"><path d="M0 0l38 13-7 7 41 37-7 8-43-37-8 8z" fill="#f00" /></Pointer>
    </Page>
  );
}
